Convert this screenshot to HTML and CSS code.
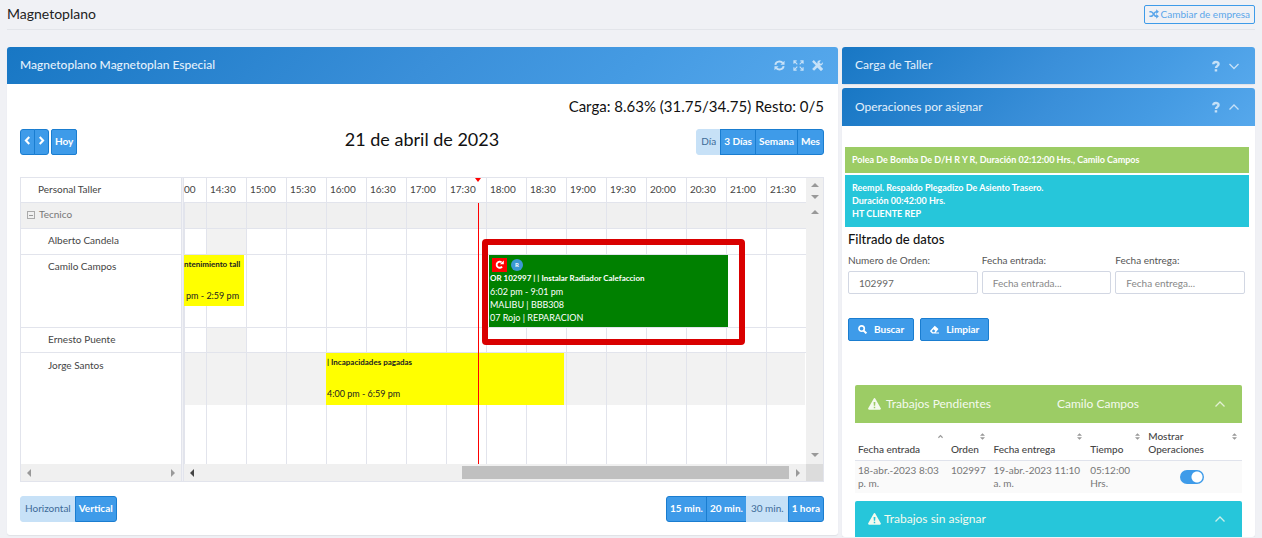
FILE: index.html
```html
<!DOCTYPE html>
<html lang="es">
<head>
<meta charset="utf-8">
<meta name="viewport" content="width=device-width, initial-scale=1">
<title>Magnetoplano</title>
<link rel="stylesheet" href="styles.css">
</head>
<body>
<svg class="defs" aria-hidden="true">
  <symbol id="i-up" viewBox="0 0 12 12"><path d="M1.500 8.500 6 4l4.500 4.500" fill="none" stroke="currentColor" stroke-width="1.300"/></symbol>
  <symbol id="i-down" viewBox="0 0 12 12"><path d="M1.500 4 6 8.500 10.500 4" fill="none" stroke="currentColor" stroke-width="1.300"/></symbol>
  <symbol id="i-help" viewBox="0 0 12 12"><path d="M3.300 4.200C3.300 1.300 8.600 1.300 8.600 4c0 1.800-2.600 1.900-2.600 4" fill="none" stroke="currentColor" stroke-width="2.400"/><path d="M4.700 9.200h2.500v2.300H4.700z" fill="currentColor"/></symbol>
  <symbol id="i-warn" viewBox="0 0 14 13"><path fill="currentColor" fill-rule="evenodd" d="M6.200.6a.95.95 0 0 1 1.600 0l6 10.600c.4.700 0 1.500-.8 1.500H1c-.8 0-1.200-.8-.8-1.500zM6 4.200l.3 4.300h1.400L8 4.200zM6.200 9.400V11h1.600V9.400z"/></symbol>
</svg>

<header class="topbar">
  <h1 class="page-title">Magnetoplano</h1>
  <button class="company" type="button">
    <svg class="icon-sm" viewBox="0 0 12 12" fill="none" stroke="currentColor" stroke-width="1.800"><path d="M.5 3.200h2c2.500 0 3.500 5.600 6 5.600h1M.5 8.800h2c2.500 0 3.500-5.600 6-5.600h1"/><path d="M8.600.4 11.900 3.200 8.600 6zM8.600 6l3.300 2.800-3.300 2.800z" fill="currentColor" stroke="none"/></svg>
    Cambiar de empresa
  </button>
</header>

<main class="columns">
  <section class="panel planner">
    <div class="panel-head">
      <h2 class="panel-title strong">Magnetoplano Magnetoplan Especial</h2>
      <div class="tools">
        <button class="tool" type="button" aria-label="Actualizar"><svg viewBox="0 0 12 12" fill="none" stroke="currentColor" stroke-width="2.100"><path d="M1.500 5.200C2 1 7.500.8 9.500 3.200M10.500 6.800C10 11 4.500 11.200 2.500 8.800"/><path d="M11.500.8v4.500H7zM.5 11.200V6.700H5z" fill="currentColor" stroke="none"/></svg></button>
        <button class="tool" type="button" aria-label="Pantalla completa"><svg viewBox="0 0 12 12" fill="none" stroke="currentColor" stroke-width="1.200"><path d="M1 4V1h3M8 1h3v3M11 8v3H8M4 11H1V8M1 1l3.700 3.700M11 1 7.300 4.700M11 11 7.300 7.300M1 11l3.700-3.700"/></svg></button>
        <button class="tool" type="button" aria-label="Herramientas"><svg viewBox="0 0 12 12" fill="none" stroke="currentColor"><path d="M1 1 6 6" stroke-width="2.600"/><path d="M1.200 10.800 8.200 3.800" stroke-width="3"/><path d="M11.800 2.500 9.800 4.300 8 2.600 9.700.5C7-.3 5.200 1.800 6 4l2 2c2.300.6 4.400-1.200 3.800-3.500z" fill="currentColor" stroke="none"/><path d="M6.500 6.500 11 11" stroke-width="3.400"/></svg></button>
      </div>
    </div>
    <div class="planner-body">
      <p class="load">Carga: 8.63% (31.75/34.75) Resto: 0/5</p>
      <div class="toolbar">
        <div class="nav">
          <div class="group">
            <button class="btn arrow" type="button" aria-label="Anterior"><svg viewBox="0 0 8 10"><path d="M6 1 2.200 5 6 9" fill="none" stroke="currentColor" stroke-width="2.400"/></svg></button>
            <button class="btn arrow" type="button" aria-label="Siguiente"><svg viewBox="0 0 8 10"><path d="M2 1l3.800 4L2 9" fill="none" stroke="currentColor" stroke-width="2.400"/></svg></button>
          </div>
          <button class="btn" type="button">Hoy</button>
        </div>
        <h3 class="date">21 de abril de 2023</h3>
        <div class="group end">
          <button class="btn active" type="button">Día</button>
          <button class="btn" type="button">3 Días</button>
          <button class="btn" type="button">Semana</button>
          <button class="btn" type="button">Mes</button>
        </div>
      </div>

      <div class="schedule">
        <div class="names">
          <div class="row head">Personal Taller</div>
          <div class="row section"><button class="collapse" type="button" aria-label="Contraer"></button>Tecnico</div>
          <div class="row">Alberto Candela</div>
          <div class="row tall">Camilo Campos</div>
          <div class="row short">Ernesto Puente</div>
          <div class="row last">Jorge Santos</div>
          <div class="hscroll"><i class="tri left"></i><i class="tri right"></i></div>
        </div>
        <div class="divider"></div>
        <div class="timeline">
          <div class="hours">
            <span class="first">00</span><span>14:30</span><span>15:00</span><span>15:30</span><span>16:00</span><span>16:30</span><span>17:00</span><span>17:30</span><span>18:00</span><span>18:30</span><span>19:00</span><span>19:30</span><span>20:00</span><span>20:30</span><span>21:00</span><span>21:30</span>
            <i class="now-mark"></i>
          </div>
          <div class="lanes">
            <div class="row section"></div>
            <div class="row"><div class="off meal"></div></div>
            <div class="row tall">
              <div class="event yellow past"><b>ntenimiento tall</b><span class="time">pm - 2:59 pm</span></div>
              <div class="event green" style="left:305px;width:239px">
                <div class="badges"><span class="redo"><svg viewBox="0 0 12 12"><path d="M8.800 8.300A3.300 3.300 0 1 1 8.300 3.700" fill="none" stroke="currentColor" stroke-width="2"/><path d="M10.700 1.500v4.300H6.400z" fill="currentColor"/></svg></span><span class="round">R</span></div>
                <b>OR 102997 | | Instalar Radiador Calefaccion</b>
                <span>6:02 pm - 9:01 pm</span>
                <span>MALIBU | BBB308</span>
                <span>07 Rojo | REPARACION</span>
              </div>
            </div>
            <div class="row short"><div class="off meal"></div></div>
            <div class="row last">
              <div class="off absence"></div>
              <div class="event yellow" style="left:142px;width:238px"><b>| Incapacidades pagadas</b><span class="time">4:00 pm - 6:59 pm</span></div>
            </div>
            <i class="now-line"></i>
            <div class="highlight"></div>
          </div>
          <div class="hscroll live"><i class="tri left dark"></i><div class="thumb"></div><i class="tri right"></i></div>
        </div>
        <div class="vscroll">
          <div class="vpart top"><i class="tri up"></i><i class="tri down"></i></div>
          <div class="vpart"><i class="tri up"></i><i class="tri down"></i></div>
          <div class="corner"></div>
        </div>
      </div>

      <div class="footer">
        <div class="group">
          <button class="btn active" type="button">Horizontal</button>
          <button class="btn" type="button">Vertical</button>
        </div>
        <div class="group">
          <button class="btn" type="button">15 min.</button>
          <button class="btn" type="button">20 min.</button>
          <button class="btn active" type="button">30 min.</button>
          <button class="btn" type="button">1 hora</button>
        </div>
      </div>
    </div>
  </section>

  <aside class="side">
    <section class="panel">
      <div class="panel-head">
        <h2 class="panel-title">Carga de Taller</h2>
        <div class="tools"><button class="tool" type="button" aria-label="Ayuda"><svg><use href="#i-help"/></svg></button><button class="tool" type="button" aria-label="Expandir"><svg><use href="#i-down"/></svg></button></div>
      </div>
    </section>
    <section class="panel">
      <div class="panel-head high">
        <h2 class="panel-title">Operaciones por asignar</h2>
        <div class="tools"><button class="tool" type="button" aria-label="Ayuda"><svg><use href="#i-help"/></svg></button><button class="tool" type="button" aria-label="Contraer"><svg><use href="#i-up"/></svg></button></div>
      </div>
      <div class="tasks">
        <div class="task lime">Polea De Bomba De D/H R Y R, Duración 02:12:00 Hrs., Camilo Campos</div>
        <div class="task cyan">Reempl. Respaldo Plegadizo De Asiento Trasero.<br>Duración 00:42:00 Hrs.<br>HT CLIENTE REP</div>
      </div>
      <form class="filter">
        <h3 class="filter-title">Filtrado de datos</h3>
        <div class="fields">
          <div class="field"><label for="orden">Numero de Orden:</label><input id="orden" type="text" value="102997"></div>
          <div class="field"><label for="entrada">Fecha entrada:</label><input id="entrada" type="text" placeholder="Fecha entrada..."></div>
          <div class="field"><label for="entrega">Fecha entrega:</label><input id="entrega" type="text" placeholder="Fecha entrega..."></div>
        </div>
        <div class="actions">
          <button class="btn action" type="button"><svg viewBox="0 0 10 10"><circle cx="4" cy="4" r="3" fill="none" stroke="currentColor" stroke-width="1.800"/><path d="M6.200 6.200 9.300 9.300" stroke="currentColor" stroke-width="2.200"/></svg>Buscar</button>
          <button class="btn action" type="button"><svg viewBox="0 0 10 10"><path fill="currentColor" fill-rule="evenodd" d="M5.300.7 9.400 4.500 6.300 8.200H10v1.200H2.500L.2 7.200V6.400zM2 6.700 3.300 8h1.400l1.200-1.300L4 4.700z"/></svg>Limpiar</button>
        </div>
      </form>
      <div class="jobs">
        <div class="job-head lime">
          <svg class="warn"><use href="#i-warn"/></svg><span class="job-title spaced">Trabajos Pendientes</span><span class="job-owner">Camilo Campos</span>
          <button class="tool" type="button" aria-label="Contraer"><svg><use href="#i-up"/></svg></button>
        </div>
        <table class="job-table">
          <colgroup><col class="c1"><col class="c2"><col class="c3"><col class="c4"><col class="c5"></colgroup>
          <thead><tr>
            <th><span class="sort asc"><svg viewBox="0 0 6 8"><path d="M.5 5.500 3 3l2.500 2.500" fill="none" stroke="currentColor" stroke-width="1.400"/></svg></span>Fecha entrada</th>
            <th><span class="sort"><svg viewBox="0 0 6 8"><path d="M3 0l3 3.200H0zM3 8l3-3.200H0z" fill="currentColor"/></svg></span>Orden</th>
            <th><span class="sort"><svg viewBox="0 0 6 8"><path d="M3 0l3 3.200H0zM3 8l3-3.200H0z" fill="currentColor"/></svg></span>Fecha entrega</th>
            <th><span class="sort"><svg viewBox="0 0 6 8"><path d="M3 0l3 3.200H0zM3 8l3-3.200H0z" fill="currentColor"/></svg></span>Tiempo</th>
            <th><span class="sort"><svg viewBox="0 0 6 8"><path d="M3 0l3 3.200H0zM3 8l3-3.200H0z" fill="currentColor"/></svg></span>Mostrar<br>Operaciones</th>
          </tr></thead>
          <tbody><tr>
            <td>18-abr.-2023 8:03<br>p. m.</td><td>102997</td><td>19-abr.-2023 11:10<br>a. m.</td><td>05:12:00<br>Hrs.</td>
            <td class="center"><input class="switch" type="checkbox" checked aria-label="Mostrar Operaciones"></td>
          </tr></tbody>
        </table>
        <div class="job-head cyan">
          <svg class="warn"><use href="#i-warn"/></svg><span class="job-title">Trabajos sin asignar</span>
          <button class="tool" type="button" aria-label="Contraer"><svg><use href="#i-up"/></svg></button>
        </div>
      </div>
    </section>
  </aside>
</main>
</body>
</html>
```
FILE: styles.css
```css
* { box-sizing: border-box; }
body { margin: 0; background: #f0f1f5; color: #555; font: 10px/13px Lato, "Open Sans", sans-serif; }
h1, h2, h3, p { margin: 0; font-weight: 400; }
button, input { font: inherit; margin: 0; }
svg { display: block; }
.defs { display: none; }

.topbar { display: flex; justify-content: space-between; align-items: center; height: 30px; margin: 0 7px; border-bottom: 1px solid #e3e5ea; }
.page-title { color: #222; font-size: 14px; line-height: 20px; padding-bottom: 1px; }
.company { display: flex; align-items: center; gap: 2px; height: 19px; padding: 0 4px 1px; border: 1px solid #3e9be9; border-radius: 2px; background: transparent; color: #5aa6ea; font-size: 10px; line-height: 13px; }
.icon-sm { width: 10px; height: 10px; }

.columns { display: grid; grid-template-columns: 831fr 413fr; gap: 4px; align-items: start; padding: 17px 7px 0; }
.panel { background: #fff; border-radius: 3px; box-shadow: 0 1px 1px #dfe1e6; }
.panel-head { display: flex; align-items: center; justify-content: space-between; height: 37px; padding: 0 15px 0 13px; border-radius: 3px 3px 0 0; background: linear-gradient(135deg, #1877c4, #3a8fd9 50%, #459be3 75%, #56a8ec); color: #e4f1fc; }
.panel-head.high { height: 38px; }
.panel-title { font-size: 12px; line-height: 16px; padding-bottom: 1px; }
.panel-title.strong { font-weight: 500; }
.tools { display: flex; gap: 6px; }
.tool { padding: 0; border: 0; background: none; color: inherit; opacity: .8; }
.tool svg { width: 12px; height: 12px; }
.planner .tool svg { width: 11px; height: 11px; }
.planner .tools { gap: 8px; }

.planner-body { padding: 12px 14px 13px 13px; }
.load { color: #111; font-size: 15px; line-height: 20px; text-align: right; }
.toolbar { display: grid; grid-template-columns: 1fr auto 1fr; align-items: center; margin-top: 12px; height: 26px; }
.nav, .group { display: flex; }
.nav { gap: 2px; }
.end { justify-content: flex-end; }
.date { color: #111; font-size: 18px; line-height: 22px; padding-bottom: 6px; }
.btn { display: flex; align-items: center; justify-content: center; height: 26px; padding: 0 3px 2px; border: 1px solid #1a7dd0; border-radius: 2px; background: #3e9be9; color: #fff; font-size: 10px; font-weight: 700; line-height: 13px; white-space: nowrap; }
.nav > .btn { padding: 0 3px 2px; }
.group .btn { border-radius: 0; }
.group .btn + .btn { margin-left: -1px; }
.group .btn:first-child { border-radius: 3px 0 0 3px; }
.group .btn:last-child { border-radius: 0 3px 3px 0; }
.btn.active { padding: 0 4px 2px; border-color: #c7e1f7; background: #c7e1f7; color: #3d6b98; font-weight: 400; }
.group .btn.arrow { width: 15px; padding: 0 0 3px; }
.btn.arrow svg { width: 7px; height: 9px; }

.schedule { display: grid; grid-template-columns: 160px 3px 1fr 17px; margin-top: 23px; border: 1px solid #e2e4ec; color: #444; }
.divider { border: solid #e2e4ec; border-width: 0 1px; background: #f0f1f5; }
.row { position: relative; height: 26px; border-bottom: 1px solid #e2e4ec; }
.names .row { padding: 5px 0 0 27px; }
.names .row.head { height: 25px; padding-left: 17px; }
.names .row.section { display: flex; gap: 4px; padding-left: 6px; color: #777; }
.row.section { background: #f0f0f0; }
.collapse { width: 8px; height: 8px; margin-top: 3px; padding: 0; border: 1px solid #aaa; background: linear-gradient(#999, #999) center / 4px 1px no-repeat; }
.row.tall { height: 73px; }
.row.short { height: 25px; }
.row.last { height: 111px; border-bottom: 0; }
.names .row.last { padding-top: 6px; }
.timeline { min-width: 0; overflow: hidden; }
.hours { position: relative; display: flex; height: 25px; overflow: hidden; border-bottom: 1px solid #e2e4ec; }
.hours span { flex: 0 0 40px; padding: 5px 0 0 3px; border-left: 1px solid #e2e4ec; }
.hours .first { flex-basis: 22px; padding-left: 0; border-left: 0; }
.lanes { position: relative; }
.lanes::before { content: ""; position: absolute; inset: 0; z-index: 1; background: repeating-linear-gradient(90deg, #e2e4ec 0 1px, transparent 1px 40px) 22px 0; pointer-events: none; }
.off { position: absolute; background: #f2f2f2; }
.meal { left: 22px; width: 40px; height: 100%; }
.absence { left: 0; right: 1px; height: 52px; }
.event { position: absolute; z-index: 2; display: flex; flex-direction: column; overflow: hidden; font-size: 9px; line-height: 12px; white-space: nowrap; }
.event.yellow { height: 52px; padding: 3px 0 0 1px; background: #ff0; color: #222; }
.event.past { left: 0; width: 60px; height: 51px; padding-left: 0; }
.event b { font-size: 8px; }
.yellow .time { padding-top: 20px; }
.past .time { padding-left: 2px; }
.event.green { height: 72px; padding: 2px 0 0 1px; background: green; color: #fff; line-height: 13px; }
.badges { display: flex; align-items: center; gap: 4px; height: 15px; padding-left: 2px; }
.redo { display: grid; place-items: center; width: 15px; height: 14px; background: #f00; color: #fff; }
.redo svg { width: 11px; height: 11px; }
.round { width: 12px; height: 12px; border-radius: 50%; background: #3d98d3; font-size: 6px; font-weight: 700; line-height: 12px; text-align: center; }
.now-line { position: absolute; z-index: 3; top: 0; bottom: 0; left: 294px; width: 1px; background: red; }
.now-mark { position: absolute; top: 0; left: 291px; border: solid transparent; border-width: 4px 3px 0; border-top-color: red; }
.highlight { position: absolute; z-index: 4; top: 36px; left: 298px; width: 263px; height: 106px; border: 6px solid #d90000; border-radius: 4px; }
.hscroll { display: flex; align-items: center; justify-content: space-between; height: 17px; padding: 0 6px; background: #f0f0f0; }
.hscroll.live { justify-content: flex-start; }
.thumb { width: 327px; height: 13px; margin: 0 7px 0 auto; background: #c0c0c0; }
.tri { border: 4px solid transparent; }
.tri.left { border-width: 4px 4px 4px 0; border-right-color: #999; }
.tri.right { border-width: 4px 0 4px 4px; border-left-color: #999; }
.tri.up { border-width: 0 4px 4px; border-bottom-color: #999; }
.tri.down { border-width: 4px 4px 0; border-top-color: #999; }
.tri.dark { border-right-color: #444; }
.vscroll { display: flex; flex-direction: column; background: #f0f0f0; }
.vpart { flex: 1; display: flex; flex-direction: column; align-items: center; justify-content: space-between; padding: 7px 0; }
.vpart.top { flex: 0 0 25px; padding: 5px 0 4px; }
.corner { height: 17px; background: #dcdcdc; }
.footer { display: flex; justify-content: space-between; margin-top: 14px; }

.side { display: grid; gap: 4px; }
.tasks { display: grid; gap: 2px; padding: 21px 6px 0 3px; }
.task { padding: 6px 7px 7px; color: #fff; font-size: 9px; line-height: 13px; font-weight: 700; }
.lime { background: #9ccc65; }
.cyan { background: #26c6da; }
.filter { padding: 4px 10px 0 6px; }
.filter-title { color: #111; font-size: 13px; line-height: 16px; font-weight: 500; }
.fields { display: grid; grid-template-columns: repeat(3, 1fr); gap: 4px; margin-top: 7px; }
.field label { display: block; line-height: 13px; margin-bottom: 4px; }
.field input { display: block; width: 100%; height: 23px; padding: 0 10px; border: 1px solid #d2d7e3; border-radius: 2px; background: #fff; color: #666; }
.field input::placeholder { color: #888; opacity: 1; }
.actions { display: flex; gap: 6px; margin-top: 24px; }
.action { height: 23px; padding: 0 9px 1px; gap: 7px; }
.action svg { width: 9px; height: 9px; }
.jobs { padding: 44px 13px 0; }
.job-head { display: flex; align-items: center; height: 38px; padding: 0 16px 0 13px; border-radius: 2px 2px 0 0; color: #f4faee; font-size: 12px; line-height: 16px; }
.job-head.cyan { height: 36px; margin-top: 8px; }
.job-head .tool { margin-left: auto; }
.warn { width: 13px; height: 12px; margin-right: 3px; }
.job-title.spaced { flex: 0 0 173px; padding-left: 2px; }
.job-table { width: 100%; table-layout: fixed; border-collapse: collapse; font-size: 10px; line-height: 13px; color: #777; }
.c1 { width: 24%; }
.c2 { width: 11%; }
.c3 { width: 25%; }
.c4 { width: 15%; }
.job-table th { position: relative; height: 37px; padding: 7px 0 4px 3px; border-bottom: 1px solid #e0e3ec; color: #444; font-weight: 500; text-align: left; vertical-align: bottom; }
.job-table td { padding: 3px 0 3px 3px; background: #fafafa; vertical-align: top; white-space: nowrap; }
.sort { position: absolute; top: 10px; right: 5px; color: #999; }
.sort svg { width: 5px; height: 7px; }
.job-table .center { padding-right: 6px; text-align: center; vertical-align: middle; }
.switch { appearance: none; width: 24px; height: 14px; border-radius: 7px; background: radial-gradient(circle at 17px 7px, #fff 5px, #3e9be9 6px); vertical-align: middle; }
```
